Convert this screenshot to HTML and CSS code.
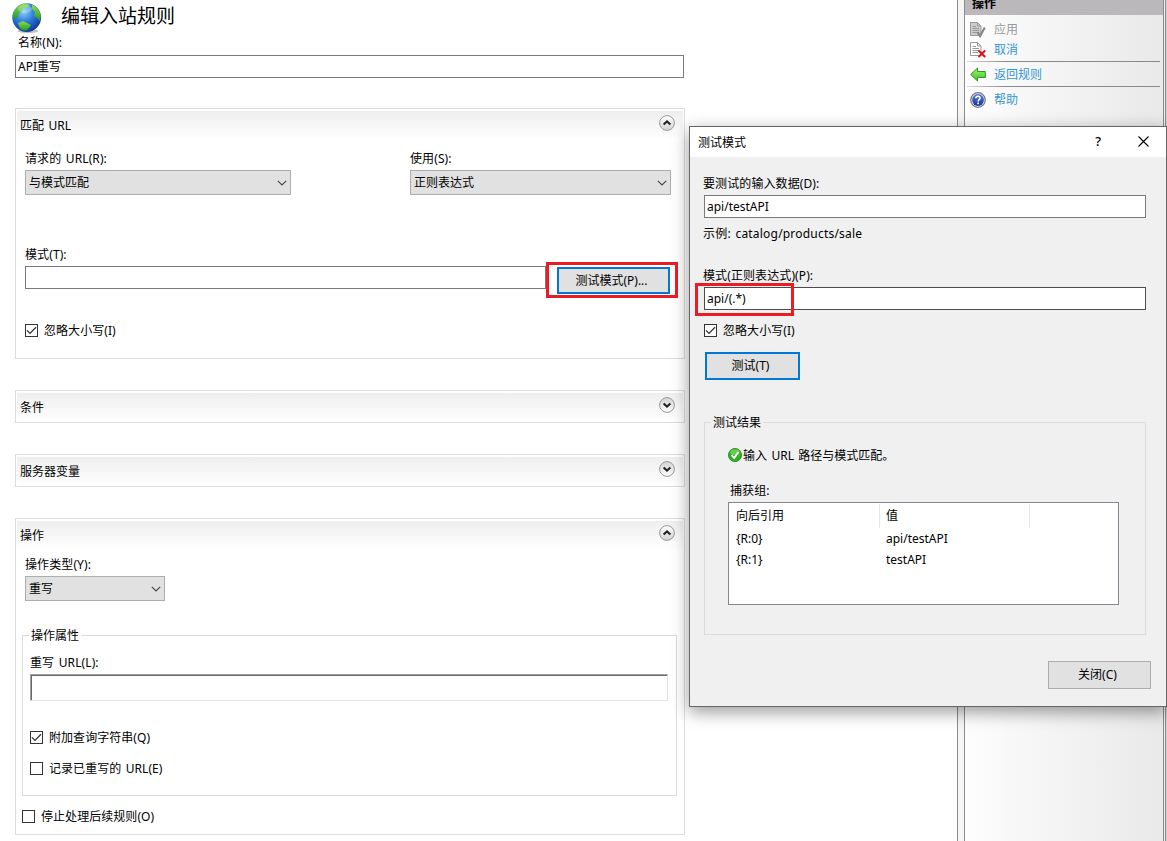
FILE: index.html
```html
<!DOCTYPE html>
<html lang="zh-CN">
<head>
    <meta charset="UTF-8">
    <meta name="viewport" content="width=device-width, initial-scale=1.0">
    <title>编辑入站规则</title>

    <link rel="stylesheet" href="styles.css">
</head>
<body>
    <!-- Shared symbols -->
    <svg class="symbols">
        <symbol id="arrow-down" viewBox="0 0 10 6">
            <path d="M0.8 0.8 L5 5 L9.2 0.8" fill="none" stroke="#444" stroke-width="1.1"/>
        </symbol>
        <symbol id="tick" viewBox="0 0 11 11">
            <path d="M1 5.4 L4 8.4 L10 2.3" fill="none" stroke="#333" stroke-width="1.3"/>
        </symbol>
        <symbol id="toggle" viewBox="0 0 16 16">
            <circle cx="8" cy="8" r="7.4" fill="url(#toggleFill)" stroke="#999" stroke-width="1"/>
            <path d="M4.6 9.6 L8 6.4 L11.4 9.6" fill="none" stroke="#222" stroke-width="2"/>
        </symbol>
        <symbol id="page" viewBox="0 0 16 16">
            <path d="M0.5 0.5 H7.5 L11 4 V13.5 H0.5 Z" stroke-width="1"/>
            <path d="M7.5 0.5 V4 H11" fill="none"/>
            <path d="M2.5 4.5 H6 M2.5 6.5 H9 M2.5 8.5 H9 M2.5 10.5 H8" class="lines"/>
        </symbol>
        <defs>
            <linearGradient id="toggleFill" x1="0" y1="0" x2="0" y2="1">
                <stop offset="0" stop-color="#fff"/>
                <stop offset="1" stop-color="#d2d2d2"/>
            </linearGradient>
            <radialGradient id="globeFill" cx="0.4" cy="0.3" r="0.75">
                <stop offset="0" stop-color="#8fd0fa"/>
                <stop offset="0.45" stop-color="#2f7fdc"/>
                <stop offset="1" stop-color="#0c2f94"/>
            </radialGradient>
            <linearGradient id="landFill" x1="0" y1="0" x2="0" y2="1">
                <stop offset="0" stop-color="#8fdc4c"/>
                <stop offset="1" stop-color="#1f9a2c"/>
            </linearGradient>
            <linearGradient id="backFill" x1="0" y1="0" x2="0" y2="1">
                <stop offset="0" stop-color="#a4f07c"/>
                <stop offset="1" stop-color="#3cc41e"/>
            </linearGradient>
            <linearGradient id="helpFill" x1="0" y1="0" x2="0" y2="1">
                <stop offset="0" stop-color="#5a7fd8"/>
                <stop offset="1" stop-color="#12349c"/>
            </linearGradient>
        </defs>
    </svg>

    <div class="page">
        <main class="editor">
            <header class="title">
                <svg class="globe" viewBox="0 0 30 31">
                    <ellipse cx="16" cy="28" rx="10.5" ry="2.2" fill="#888" opacity="0.5"/>
                    <circle cx="14.7" cy="14.6" r="14.4" fill="url(#globeFill)"/>
                    <path d="M3 7 C6 2 10 0.4 14 0.4 L18 2 L14 5 L11 5 L10 8 L7 10 L5 15 L2 16 L0.6 12 Z" fill="url(#landFill)"/>
                    <path d="M20 1.6 C25 4 28 8 29 13 L27.5 18 L25 15 L22 13 L23 9 L20 6 Z" fill="url(#landFill)"/>
                    <path d="M6 20 L11 18 L16 20.5 L19 22 L15 27.5 L11 27.5 C8.5 26.5 7 24 6 20 Z" fill="url(#landFill)"/>
                    <ellipse cx="13" cy="6" rx="7" ry="4" fill="#fff" opacity="0.25"/>
                </svg>
                <h1>编辑入站规则</h1>
            </header>

            <label class="label name-label">名称(N):</label>
            <input class="text-input name-input" type="text" value="API重写">

            <section class="group match-group">
                <div class="group-header">
                    <h2>匹配 URL</h2>
                    <svg class="toggle"><use href="#toggle"/></svg>
                </div>
                <div class="group-body">
                    <div class="match-row">
                        <div class="field">
                            <label class="label">请求的 URL(R):</label>
                            <div class="select select-url">与模式匹配<svg><use href="#arrow-down"/></svg></div>
                        </div>
                        <div class="field">
                            <label class="label">使用(S):</label>
                            <div class="select select-using">正则表达式<svg><use href="#arrow-down"/></svg></div>
                        </div>
                    </div>
                    <label class="label">模式(T):</label>
                    <div class="pattern-row">
                        <input class="text-input" type="text">
                        <div class="mark mark-button">
                            <button class="button default">测试模式(P)...</button>
                        </div>
                    </div>
                    <div class="check"><span class="box"><svg><use href="#tick"/></svg></span>忽略大小写(I)</div>
                </div>
            </section>

            <section class="group">
                <div class="group-header">
                    <h2>条件</h2>
                    <svg class="toggle closed"><use href="#toggle"/></svg>
                </div>
            </section>

            <section class="group">
                <div class="group-header">
                    <h2>服务器变量</h2>
                    <svg class="toggle closed"><use href="#toggle"/></svg>
                </div>
            </section>

            <section class="group action-group">
                <div class="group-header">
                    <h2>操作</h2>
                    <svg class="toggle"><use href="#toggle"/></svg>
                </div>
                <div class="group-body">
                    <label class="label">操作类型(Y):</label>
                    <div class="select select-action">重写<svg><use href="#arrow-down"/></svg></div>
                    <fieldset class="action-props">
                        <legend>操作属性</legend>
                        <label class="label">重写 URL(L):</label>
                        <input class="sunken-input" type="text">
                        <div class="check"><span class="box"><svg><use href="#tick"/></svg></span>附加查询字符串(Q)</div>
                        <div class="check"><span class="box"></span>记录已重写的 URL(E)</div>
                    </fieldset>
                    <div class="check stop-check"><span class="box"></span>停止处理后续规则(O)</div>
                </div>
            </section>
        </main>

        <aside class="actions">
            <h2>操作</h2>
            <ul>
                <li class="disabled">
                    <svg class="icon page-grey" viewBox="0 0 16 16"><use href="#page"/><path d="M7.5 10 L10 14 L14.8 5.5" fill="none" stroke="#858585" stroke-width="2.2"/></svg>
                    应用
                </li>
                <li>
                    <svg class="icon page-blue" viewBox="0 0 16 16"><use href="#page"/><path d="M8.5 8.5 L15.2 15 M15.2 8.5 L8.5 15" fill="none" stroke="#d81414" stroke-width="2"/></svg>
                    取消
                </li>
                <li class="separated">
                    <svg class="icon" viewBox="0 0 16 16"><path d="M0.7 7.5 L7.5 1 V4.5 H15.3 V10.5 H7.5 V14 Z" fill="url(#backFill)" stroke="#2c9a1c" stroke-width="1"/></svg>
                    返回规则
                </li>
                <li class="separated">
                    <svg class="icon" viewBox="0 0 16 16">
                        <circle cx="8" cy="8" r="7.3" fill="#e4e4e4" stroke="#777" stroke-width="1.2"/>
                        <circle cx="8" cy="8" r="5.9" fill="url(#helpFill)"/>
                        <path d="M5.9 6.3 C5.9 3.6 10.3 3.7 10.1 6.2 C10 7.7 8.1 7.7 8.1 9.4 M8.1 10.6 V12.2" fill="none" stroke="#fff" stroke-width="1.6"/>
                    </svg>
                    帮助
                </li>
            </ul>
        </aside>
        <div class="edge"></div>
    </div>

    <!-- Test pattern dialog -->
    <div class="dialog">
        <div class="dialog-title">
            <span class="caption">测试模式</span>
            <span class="help">?</span>
            <svg class="close" viewBox="0 0 11 11"><path d="M0.5 0.5 L10.5 10.5 M10.5 0.5 L0.5 10.5" stroke="#000" stroke-width="1.1"/></svg>
        </div>
        <div class="dialog-body">
            <label class="label">要测试的输入数据(D):</label>
            <input class="text-input" type="text" value="api/testAPI">
            <p class="example">示例: catalog/products/sale</p>
            <label class="label">模式(正则表达式)(P):</label>
            <div class="pattern-field">
                <input class="text-input dark" type="text" value="api/(.*)">
                <div class="mark mark-pattern"></div>
            </div>
            <div class="check"><span class="box"><svg><use href="#tick"/></svg></span>忽略大小写(I)</div>
            <button class="button default test-button">测试(T)</button>

            <fieldset class="results">
                <legend>测试结果</legend>
                <div class="status">
                    <svg viewBox="0 0 14 14">
                        <circle cx="7" cy="7" r="6.6" fill="#2fae22" stroke="#238a1c" stroke-width="0.8"/>
                        <ellipse cx="7" cy="4.2" rx="4.8" ry="3" fill="#8be070" opacity="0.6"/>
                        <path d="M3.6 7.2 L6.2 10 L10.4 4" fill="none" stroke="#fff" stroke-width="1.8"/>
                    </svg>
                    <span>输入 URL 路径与模式匹配。</span>
                </div>
                <label class="label">捕获组:</label>
                <div class="list">
                    <div class="list-row list-head"><span>向后引用</span><span>值</span></div>
                    <div class="list-row"><span>{R:0}</span><span>api/testAPI</span></div>
                    <div class="list-row"><span>{R:1}</span><span>testAPI</span></div>
                </div>
            </fieldset>
            <button class="button close-button">关闭(C)</button>
        </div>
    </div>
</body>
</html>
```
FILE: styles.css
```css
* {
    box-sizing: border-box;
}

body {
    margin: 0;
    height: 841px;
    overflow: hidden;
    position: relative;
    background-color: #fff;
    color: #000;
    font-family: "Noto Sans", "Noto Sans CJK SC", sans-serif;
    font-size: 12px;
    line-height: 16px;
    word-spacing: 1.3px;
}

h1, h2, p, ul {
    margin: 0;
    padding: 0;
    font-weight: normal;
}

input, button {
    font: inherit;
    color: inherit;
    border-radius: 0;
    outline: none;
}

.symbols {
    position: absolute;
    width: 0;
    height: 0;
}

.page {
    display: flex;
    height: 841px;
}

/* Left side: rule editor */
.editor {
    width: 958px;
    padding-left: 15px;
    border-right: 1px solid #8c8c8c;
}

.title {
    display: flex;
    height: 34px;
    margin-left: -3px;
    padding-top: 3px;
}

.globe {
    width: 30px;
    height: 31px;
}

.title h1 {
    margin-left: 19px;
    font-size: 19px;
    line-height: 26px;
}

.label {
    display: block;
    height: 16px;
    line-height: 17px;
    letter-spacing: 0.1px;
    white-space: nowrap;
}

.name-label {
    margin-left: 3px;
}

.text-input {
    display: block;
    width: 100%;
    height: 23px;
    padding: 0 2px;
    border: 1px solid #7a7a7a;
    background-color: #fff;
}

.text-input.dark {
    border-color: #4c4c4c;
}

.name-input {
    width: 669px;
    margin-top: 5px;
    padding-bottom: 2px;
}

.group {
    width: 670px;
    margin-top: 31px;
    border: 1px solid #dcdcdc;
}

.match-group {
    height: 251px;
    margin-top: 30px;
}

.action-group {
    height: 317px;
}

.group-header {
    display: flex;
    align-items: center;
    justify-content: space-between;
    height: 29px;
    margin: 2px 1px 0;
    padding: 0 8px 0 3px;
    background: linear-gradient(#eee, #fff);
}

.group-header h2 {
    font-size: 12px;
}

.toggle {
    width: 16px;
    height: 16px;
    margin-bottom: 5px;
}

.toggle.closed {
    transform: rotate(180deg);
}

.group-body {
    padding: 0 13px 0 9px;
}

.match-row {
    display: flex;
    justify-content: space-between;
    padding-top: 10px;
    margin-bottom: 51px;
}

.select {
    display: flex;
    align-items: center;
    justify-content: space-between;
    height: 25px;
    margin-top: 4px;
    padding: 0 3px;
    border: 1px solid #adadad;
    background-color: #e1e1e1;
}

.select svg {
    width: 10px;
    height: 6px;
}

.select-url {
    width: 266px;
}

.select-using {
    width: 261px;
}

.select-action {
    width: 140px;
}

.pattern-row {
    display: flex;
    height: 23px;
    margin: 4px -7px 34px 0;
}

/* Red highlight frames */
.mark {
    border: 3px solid #ed1c24;
}

.mark-button {
    flex: none;
    width: 132px;
    height: 36px;
    margin-top: -4px;
    padding: 2px 5px 1px 8px;
    background-color: #fff;
}

.mark-pattern {
    position: absolute;
    left: -9px;
    top: -4px;
    width: 99px;
    height: 33px;
}

.button {
    display: block;
    padding: 0;
    border: 1px solid #adadad;
    background-color: #e1e1e1;
    text-align: center;
}

.button.default {
    border: 2px solid #0078d7;
}

.mark-button .button {
    width: 113px;
    height: 27px;
    padding-right: 4px;
}

.check {
    display: flex;
    align-items: flex-start;
    height: 16px;
    letter-spacing: 0.05px;
    white-space: nowrap;
}

.box {
    width: 13px;
    height: 13px;
    margin: 1px 6px 0 0;
    border: 1px solid #333;
    background-color: #fff;
}

.box svg {
    display: block;
    width: 11px;
    height: 11px;
}

fieldset {
    min-width: 0;
    margin: 0;
    padding: 0;
    border: 1px solid #dcdcdc;
}

legend {
    height: 17px;
    margin-left: 6px;
    padding: 0 2px;
    line-height: 18px;
}

.action-group .group-body {
    padding-top: 6px;
}

.action-props {
    width: 655px;
    height: 169px;
    margin: 26px 0 0 -3px;
    padding: 10px 8px 0 7px;
}

.action-props legend {
    margin-left: -1px;
}

.sunken-input {
    display: block;
    width: 638px;
    height: 27px;
    margin: 4px 0 29px;
    border: 1px solid #e3e3e3;
    border-top-color: #a0a0a0;
    border-left-color: #a0a0a0;
    box-shadow: inset 1px 1px 0 #696969;
}

.action-props .check + .check {
    margin-top: 15px;
}

.stop-check {
    margin: 13px 0 0 -3px;
}

/* Right side: actions pane */
.actions {
    width: 200px;
    margin-left: 6px;
    border: 1px solid #8c8c8c;
    border-width: 0 1px;
    background: linear-gradient(90deg, #fdfdfd, #e9e9e9);
    box-shadow: -6px 0 0 #f5f5f5;
}

.actions h2 {
    height: 15px;
    padding-left: 7px;
    background-color: #bbb8bb;
    font-size: 12px;
    font-weight: bold;
    line-height: 7px;
}

.actions ul {
    padding: 4px 3px 0 5px;
    list-style: none;
}

.actions li {
    display: flex;
    align-items: center;
    height: 20px;
    padding-top: 2px;
    color: #3296d2;
}

.actions li.disabled {
    color: #999;
}

.actions li.separated {
    height: 25px;
    margin-left: -3px;
    padding-left: 3px;
    border-top: 1px solid #888;
    border-image: linear-gradient(90deg, #ddd, #8a8a8a 20%) 1;
}

.actions li:nth-child(3) {
    margin-top: 2px;
}

.icon {
    width: 16px;
    height: 16px;
    margin-right: 8px;
}

.page-grey {
    fill: #ccc;
    stroke: #999;
}

.page-blue {
    fill: #fff;
    stroke: #999;
}

.page-blue .lines {
    stroke: #456;
}

.edge {
    width: 3px;
    border-left: 1px solid #eee;
    border-right: 1px solid #d0d0d0;
    background-color: #8c8c8c;
}

/* Dialog */
.dialog {
    position: absolute;
    left: 689px;
    top: 126px;
    width: 478px;
    height: 581px;
    border: 1px solid #666;
    background-color: #f0f0f0;
    box-shadow: 0 5px 16px rgba(0, 0, 0, 0.4);
}

.dialog-title {
    display: flex;
    align-items: center;
    height: 30px;
    padding: 0 17px 0 8px;
    background-color: #fff;
}

.caption {
    padding-top: 2px;
}

.help {
    margin-left: auto;
    margin-right: 37px;
    padding-bottom: 2px;
    font-size: 13px;
    font-weight: 500;
}

.close {
    width: 11px;
    height: 11px;
    margin-bottom: 1px;
}

.dialog-body {
    padding: 18px 20px 0 14px;
}

.dialog-body > .label {
    margin-left: -1px;
}

.dialog-body .text-input {
    margin-top: 4px;
}

.example {
    height: 16px;
    margin: 8px 0 25px -1px;
    letter-spacing: 0.2px;
}

.pattern-field {
    position: relative;
    margin: 4px 0 13px;
}

.test-button {
    width: 95px;
    height: 28px;
    margin: 13px 0 34px 1px;
    padding-right: 4px;
}

.results {
    height: 221px;
    padding: 16px 26px 0 23px;
}

.results legend {
    margin-left: -17px;
}

.results .label {
    margin: 19px 0 4px 2px;
}

.status {
    display: flex;
    align-items: center;
    height: 16px;
}

.status span {
    padding-top: 2px;
}

.status svg {
    width: 14px;
    height: 14px;
    margin-right: 1px;
}

.list {
    height: 103px;
    padding-top: 1px;
    border: 1px solid #828790;
    background-color: #fff;
}

.list-row {
    display: flex;
    height: 21px;
    line-height: 21px;
}

.list-row span {
    width: 150px;
    padding-left: 7px;
}

.list-head {
    height: 24px;
    line-height: 24px;
}

.list-head span {
    border-right: 1px solid #e5e5e5;
}

.list-head span:first-child {
    width: 151px;
}

.list-head span:last-child {
    padding-left: 6px;
}

.close-button {
    width: 103px;
    height: 28px;
    margin: 26px -5px 0 auto;
    padding-right: 4px;
}
```
